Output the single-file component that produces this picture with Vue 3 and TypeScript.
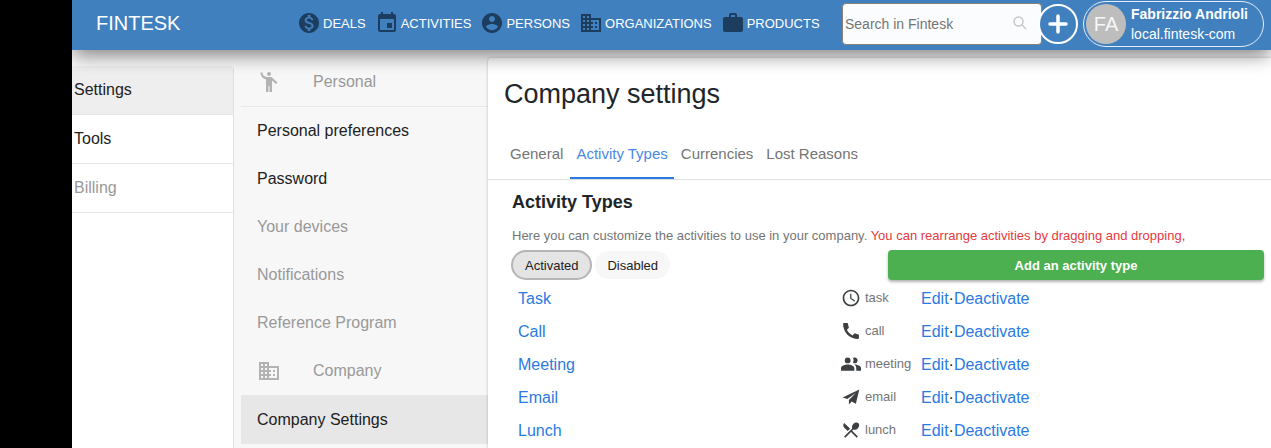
<script setup lang="ts">
import { ref } from 'vue'

interface NavItem { label: string; icon: string }
interface Section { label: string; muted?: boolean; active?: boolean; icon?: string }
interface ActivityType { name: string; code: string; icon: string }

const icons: Record<string, string> = {
  deals: 'M12 2C6.48 2 2 6.48 2 12s4.48 10 10 10 10-4.48 10-10S17.52 2 12 2zm1.41 16.09V20h-2.67v-1.93c-1.71-.36-3.16-1.46-3.27-3.4h1.96c.1 1.05.82 1.87 2.65 1.87 1.96 0 2.4-.98 2.4-1.59 0-.83-.44-1.61-2.67-2.14-2.48-.6-4.18-1.62-4.18-3.67 0-1.72 1.39-2.84 3.11-3.21V4h2.67v1.95c1.86.45 2.79 1.86 2.85 3.39H14.3c-.05-1.11-.64-1.87-2.22-1.87-1.5 0-2.4.68-2.4 1.64 0 .84.65 1.39 2.67 1.91s4.18 1.39 4.18 3.91c-.01 1.83-1.38 2.83-3.12 3.16z',
  event: 'M17 12h-5v5h5v-5zM16 1v2H8V1H6v2H5c-1.11 0-1.99.9-1.99 2L3 19c0 1.1.89 2 2 2h14c1.1 0 2-.9 2-2V5c0-1.1-.9-2-2-2h-1V1h-2zm3 18H5V8h14v11z',
  person: 'M12 2C6.48 2 2 6.48 2 12s4.48 10 10 10 10-4.48 10-10S17.52 2 12 2zm0 3c1.66 0 3 1.34 3 3s-1.34 3-3 3-3-1.34-3-3 1.34-3 3-3zm0 14.2c-2.5 0-4.71-1.28-6-3.22.03-1.99 4-3.08 6-3.08 1.99 0 5.97 1.09 6 3.08-1.29 1.94-3.5 3.22-6 3.22z',
  building: 'M12 7V3H2v18h20V7H12zM6 19H4v-2h2v2zm0-4H4v-2h2v2zm0-4H4V9h2v2zm0-4H4V5h2v2zm4 12H8v-2h2v2zm0-4H8v-2h2v2zm0-4H8V9h2v2zm0-4H8V5h2v2zm10 12h-8v-2h2v-2h-2v-2h2v-2h-2V9h8v10zm-2-8h-2v2h2v-2zm0 4h-2v2h2v-2z',
  work: 'M20 6h-4V4c0-1.11-.89-2-2-2h-4c-1.11 0-2 .89-2 2v2H4c-1.11 0-2 .89-2 2v11c0 1.11.89 2 2 2h16c1.11 0 2-.89 2-2V8c0-1.11-.89-2-2-2zm-6 0h-4V4h4v2z',
  people: 'M12 2a2 2 0 1 0 0 4 2 2 0 0 0 0-4zM3.5 2.5h2c0 2.300 1.500 4.500 4.500 4.500h4.500L20.500 12.500 19 14l-4-3.500V22h-2.500v-6h-1v6H9V9.500C5.500 8.500 3.500 5.500 3.500 2.500z',
  clock: 'M11.99 2C6.47 2 2 6.48 2 12s4.47 10 9.99 10C17.52 22 22 17.52 22 12S17.52 2 11.99 2zM12 20c-4.42 0-8-3.58-8-8s3.58-8 8-8 8 3.58 8 8-3.58 8-8 8zm.5-13H11v6l5.25 3.15.75-1.23-4.5-2.67z',
  phone: 'M8 2.500H3.500c-.6 0-1 .4-1 1 0 10 8 18 18 18 .6 0 1-.4 1-1V16.500l-5-1.700-2.700 2.500c-3-1.500-5.300-3.900-6.700-6.800L9.500 8z',
  group: 'M8 4.200a3.500 3.500 0 1 0 0 7 3.500 3.500 0 0 0 0-7zM16.500 4.200c-.8 0-1.500.2-2 .6a6 6 0 0 1 0 5.800 3.500 3.500 0 1 0 2-6.400zM8 12.500c-3.200 0-8 1.400-8 4.500v3h16v-3c0-3.100-4.800-4.500-8-4.500zM16 12.600c1.500 1.100 2.300 2.400 2.300 4.400v3H24v-3c0-2.700-4-4.200-8-4.400z',
  send: 'M22 3 2 12.500l5.500 2L18 7 9.500 15.500V21l3.300-3.500 5 2.500z',
  lunch: 'M8.100 13.340l2.830-2.830L3.910 3.500c-1.560 1.560-1.560 4.090 0 5.660l4.190 4.180zm6.780-1.810c1.530.71 3.680.21 5.270-1.380 1.910-1.910 2.280-4.650.81-6.120-1.460-1.460-4.200-1.100-6.120.81-1.590 1.590-2.090 3.740-1.380 5.270L3.700 19.870l1.410 1.410L12 14.410l6.880 6.880 1.410-1.410L13.410 13l1.470-1.470z',
}

const nav: NavItem[] = [
  { label: 'DEALS', icon: 'deals' },
  { label: 'ACTIVITIES', icon: 'event' },
  { label: 'PERSONS', icon: 'person' },
  { label: 'ORGANIZATIONS', icon: 'building' },
  { label: 'PRODUCTS', icon: 'work' },
]

const areas: Section[] = [
  { label: 'Settings', active: true },
  { label: 'Tools' },
  { label: 'Billing', muted: true },
]

const sections: Section[] = [
  { label: 'Personal', icon: 'people', muted: true },
  { label: 'Personal preferences' },
  { label: 'Password' },
  { label: 'Your devices', muted: true },
  { label: 'Notifications', muted: true },
  { label: 'Reference Program', muted: true },
  { label: 'Company', icon: 'building', muted: true },
  { label: 'Company Settings', active: true },
]

const tabs = ['General', 'Activity Types', 'Currencies', 'Lost Reasons']
const currentTab = ref('Activity Types')
const filters = ['Activated', 'Disabled']
const currentFilter = ref('Activated')
const query = ref('')

const activities: ActivityType[] = [
  { name: 'Task', code: 'task', icon: 'clock' },
  { name: 'Call', code: 'call', icon: 'phone' },
  { name: 'Meeting', code: 'meeting', icon: 'group' },
  { name: 'Email', code: 'email', icon: 'send' },
  { name: 'Lunch', code: 'lunch', icon: 'lunch' },
]
</script>

<template>
  <div class="app">
    <header class="topbar">
      <a class="brand" href="#">FINTESK</a>
      <nav class="nav" aria-label="Main">
        <a v-for="item in nav" :key="item.label" class="nav-link" href="#">
          <svg class="icon" viewBox="0 0 24 24" aria-hidden="true"><path :d="icons[item.icon]" /></svg>
          <span>{{ item.label }}</span>
        </a>
      </nav>
      <div class="tools">
        <label class="search">
          <input v-model="query" type="text" placeholder="Search in Fintesk" aria-label="Search in Fintesk" />
          <svg class="search-icon" viewBox="0 0 14 14" aria-hidden="true">
            <circle cx="5.5" cy="5.5" r="4.5" /><path d="M9 9l4 4" />
          </svg>
        </label>
        <button class="add" type="button" aria-label="Add">
          <svg viewBox="0 0 20 20" aria-hidden="true"><path d="M10 2v16M2 10h16" /></svg>
        </button>
        <button class="account" type="button">
          <span class="avatar">FA</span>
          <span class="identity"><strong>Fabrizzio Andrioli</strong><span>local.fintesk-com</span></span>
        </button>
      </div>
    </header>

    <div class="body">
      <nav class="areas" aria-label="Areas">
        <a v-for="a in areas" :key="a.label" href="#" class="area" :class="{ active: a.active, muted: a.muted }">{{ a.label }}</a>
      </nav>

      <nav class="sections" aria-label="Settings">
        <a
          v-for="s in sections"
          :key="s.label"
          href="#"
          class="section"
          :class="{ active: s.active, muted: s.muted, ruled: s.icon === 'people' }"
        >
          <svg v-if="s.icon" class="icon" viewBox="0 0 24 24" aria-hidden="true"><path :d="icons[s.icon]" /></svg>
          <span>{{ s.label }}</span>
        </a>
      </nav>

      <main class="card">
        <h1>Company settings</h1>
        <div class="tabs" role="tablist">
          <button
            v-for="t in tabs"
            :key="t"
            type="button"
            role="tab"
            class="tab"
            :class="{ active: t === currentTab }"
            :aria-selected="t === currentTab"
            @click="currentTab = t"
          >{{ t }}</button>
        </div>
        <section class="panel">
          <h2>Activity Types</h2>
          <p class="hint">
            Here you can customize the activities to use in your company.
            <span class="warn">You can rearrange activities by dragging and dropping,</span>
          </p>
          <div class="actions">
            <div class="chips">
              <button
                v-for="f in filters"
                :key="f"
                type="button"
                class="chip"
                :class="{ active: f === currentFilter }"
                @click="currentFilter = f"
              >{{ f }}</button>
            </div>
            <button class="primary" type="button">Add an activity type</button>
          </div>
          <table class="types">
            <colgroup><col class="col-name" /><col class="col-icon" /><col /></colgroup>
            <tbody>
              <tr v-for="a in activities" :key="a.code">
                <td><a href="#">{{ a.name }}</a></td>
                <td>
                  <span class="kind">
                    <svg class="kind-icon" viewBox="0 0 24 24" aria-hidden="true"><path :d="icons[a.icon]" /></svg>
                    {{ a.code }}
                  </span>
                </td>
                <td><a href="#">Edit</a>·<a href="#">Deactivate</a></td>
              </tr>
            </tbody>
          </table>
        </section>
      </main>
    </div>
  </div>
</template>

<style>
body {
  margin: 0;
  background: #000;
}
</style>

<style scoped>
.app {
  height: 100vh;
  margin-left: 72px;
  display: flex;
  flex-direction: column;
  overflow: hidden;
  background: #f7f7f7;
  color: #212529;
  font-family: "Liberation Sans", Arial, sans-serif;
  font-size: 16px;
}
.app * {
  box-sizing: border-box;
}
a {
  color: #2a7ae2;
  text-decoration: none;
}
button {
  font-family: inherit;
  cursor: pointer;
}
.icon {
  flex: none;
  width: 24px;
  height: 24px;
  fill: currentColor;
}

/* Top bar */
.topbar {
  position: relative;
  z-index: 2;
  flex: none;
  height: 50px;
  padding: 0 7px 0 24px;
  display: flex;
  align-items: flex-start;
  background: #4080bf;
  box-shadow: 0 8px 18px -2px rgba(0, 0, 0, 0.45);
}
.brand {
  flex: 0 0 201px;
  color: #fff;
  font-size: 20px;
  line-height: 46px;
}
.nav {
  display: flex;
  gap: 9px;
  height: 46px;
}
.nav-link {
  display: flex;
  align-items: center;
  gap: 2px;
  color: #fff;
  font-size: 13px;
}
.nav-link .icon {
  color: #1d3d5f;
}
.tools {
  margin-left: auto;
  display: flex;
  align-items: center;
  height: 48px;
}
.search {
  display: flex;
  align-items: center;
  width: 200px;
  height: 42px;
  padding-right: 14px;
  border: 1px solid #8a8078;
  border-radius: 4px;
  background: #fafcfd;
}
.search input {
  flex: 1;
  min-width: 0;
  padding: 0 2px;
  border: 0;
  outline: 0;
  background: transparent;
  font: 14px "Liberation Sans", Arial, sans-serif;
}
.search input::placeholder {
  color: #757575;
}
.search-icon {
  width: 14px;
  height: 14px;
  margin-bottom: 2px;
  fill: none;
  stroke: #c8c8c8;
  stroke-width: 1.5;
}
.add {
  display: grid;
  place-items: center;
  width: 40px;
  height: 40px;
  margin: 0 5px 0 -4px;
  padding: 0;
  border: 2px solid #fff;
  border-radius: 50%;
  background: #4080bf;
}
.add svg {
  width: 20px;
  height: 20px;
  stroke: #fff;
  stroke-width: 3.5;
  stroke-linecap: round;
}
.account {
  display: flex;
  align-items: center;
  gap: 5px;
  width: 181px;
  height: 46px;
  padding: 0 2px;
  border: 1px solid #e4edf6;
  border-radius: 23px;
  background: transparent;
  color: #fff;
  font-size: 14px;
  line-height: 20px;
  text-align: left;
}
.avatar {
  flex: none;
  width: 40px;
  border-radius: 50%;
  background: #bdbdbd;
  color: #f7f7f7;
  font-size: 20px;
  line-height: 40px;
  text-align: center;
}
.identity {
  display: flex;
  flex-direction: column;
  white-space: nowrap;
}

/* Columns */
.body {
  flex: 1;
  min-height: 0;
  display: flex;
}
.areas {
  flex: none;
  width: 162px;
  margin-top: 16px;
  border-right: 1px solid #e0e0e0;
  border-radius: 0 4px 0 0;
  background: #fff;
  overflow: hidden;
}
.area {
  display: block;
  height: 49px;
  padding-left: 2px;
  border-bottom: 1px solid #e4e4e4;
  color: #212121;
  line-height: 48px;
}
.area.active {
  background: #eee;
}
.area.muted,
.section.muted {
  color: #999;
}
.sections {
  flex: none;
  width: 247px;
  margin: 8px 0 0 7px;
}
.section {
  display: flex;
  align-items: center;
  gap: 32px;
  height: 48px;
  padding-left: 16px;
  color: #212121;
}
.section .icon {
  color: #b3b3b3;
}
.section.ruled {
  height: 49px;
  border-bottom: 1px solid #e8e8e8;
}
.section.active {
  height: 49px;
  background: #e7e7e7;
}
.card {
  flex: 1;
  min-width: 0;
  margin-top: 8px;
  border-radius: 4px 0 0 0;
  background: #fff;
  box-shadow: 0 0 3px rgba(0, 0, 0, 0.25);
}
h1 {
  margin: 0;
  padding-left: 16px;
  font-size: 27px;
  font-weight: 400;
  line-height: 72px;
}
.tabs {
  display: flex;
  gap: 1px;
  height: 50px;
  padding-left: 16px;
  border-bottom: 1px solid #dee0e2;
}
.tab {
  padding: 0 6px;
  border: 0;
  border-bottom: 2px solid transparent;
  background: transparent;
  color: #757575;
  font-size: 15px;
}
.tab.active {
  border-color: #2a7ae2;
  color: #4a8ae4;
}
.panel {
  padding: 10px 7px 0 24px;
}
h2 {
  margin: 0;
  font-size: 18px;
  line-height: 24px;
}
.hint {
  margin: 12px 0 4px;
  color: #757575;
  font-size: 13px;
  line-height: 20px;
}
.warn {
  color: #e53a40;
}
.actions {
  display: grid;
  grid-template-columns: 1fr 1fr;
  height: 30px;
}
.chips {
  display: flex;
  align-items: center;
  gap: 3px;
  margin-left: -1px;
}
.chip {
  height: 28px;
  padding: 0 12px;
  border: 0;
  border-radius: 15px;
  background: #f7f7f7;
  color: #212121;
  font-size: 13px;
}
.chip.active {
  height: 30px;
  border: 2px solid #b5b5b5;
  background: #e4e4e4;
}
.primary {
  border: 0;
  border-radius: 4px;
  background: #4caf50;
  box-shadow: 0 2px 3px rgba(0, 0, 0, 0.3);
  color: #fff;
  font-size: 13px;
  font-weight: 700;
}
.types {
  width: 100%;
  margin-top: 2px;
  border-collapse: collapse;
  table-layout: fixed;
}
.col-name {
  width: 43.75%;
}
.col-icon {
  width: 80px;
}
.types td {
  height: 33px;
  padding: 0;
  white-space: nowrap;
}
.types td:first-child {
  padding-left: 6px;
}
.kind {
  display: flex;
  align-items: center;
  gap: 4px;
  margin-bottom: 2px;
  color: #757575;
  font-size: 13px;
}
.kind-icon {
  width: 20px;
  height: 20px;
  fill: #3c4043;
}
</style>
